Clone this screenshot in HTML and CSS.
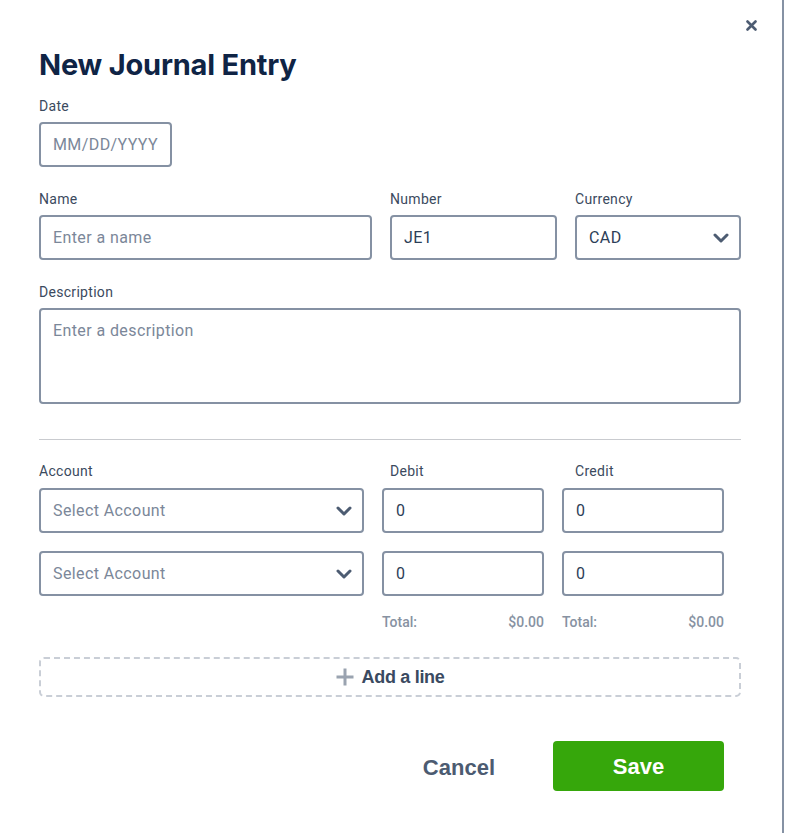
FILE: index.html
```html
<!DOCTYPE html>
<html lang="en">
<head>
  <meta charset="UTF-8">
  <title>New Journal Entry</title>
  <meta name="viewport" content="width=device-width, initial-scale=1.0">
  <link rel="stylesheet" href="styles.css">
</head>
<body>
  <div class="modal">
    <button class="close" type="button" aria-label="Close">
      <svg width="11" height="11" viewBox="0 0 11 11">
        <path d="M1.5 1.5 L9.5 9.5 M9.5 1.5 L1.5 9.5" stroke="#4d5c72" stroke-width="2.6" stroke-linecap="round"/>
      </svg>
    </button>

    <h1 class="title">New Journal Entry</h1>

    <form class="entry-form" autocomplete="off">
      <div class="field field-date">
        <label for="date">Date</label>
        <input type="text" id="date" placeholder="MM/DD/YYYY">
      </div>

      <div class="row-top">
        <div class="field">
          <label for="name">Name</label>
          <input type="text" id="name" placeholder="Enter a name">
        </div>
        <div class="field">
          <label for="number">Number</label>
          <input type="text" id="number" value="JE1">
        </div>
        <div class="field">
          <label for="currency">Currency</label>
          <div class="select-wrap">
            <select id="currency">
              <option>CAD</option>
              <option>USD</option>
            </select>
            <svg class="chevron" width="16" height="10" viewBox="0 0 16 10">
              <path d="M2 2 L8 8 L14 2" fill="none" stroke="#4d5c72" stroke-width="3" stroke-linecap="round" stroke-linejoin="round"/>
            </svg>
          </div>
        </div>
      </div>

      <div class="field">
        <label for="description">Description</label>
        <textarea id="description" placeholder="Enter a description"></textarea>
      </div>

      <hr class="divider">

      <div class="lines-head">
        <span>Account</span>
        <span>Debit</span>
        <span>Credit</span>
      </div>

      <div class="line">
        <div class="select-wrap">
          <select class="placeholder">
            <option>Select Account</option>
          </select>
          <svg class="chevron" width="16" height="10" viewBox="0 0 16 10">
            <path d="M2 2 L8 8 L14 2" fill="none" stroke="#4d5c72" stroke-width="3" stroke-linecap="round" stroke-linejoin="round"/>
          </svg>
        </div>
        <input type="text" value="0">
        <input type="text" value="0">
      </div>

      <div class="line">
        <div class="select-wrap">
          <select class="placeholder">
            <option>Select Account</option>
          </select>
          <svg class="chevron" width="16" height="10" viewBox="0 0 16 10">
            <path d="M2 2 L8 8 L14 2" fill="none" stroke="#4d5c72" stroke-width="3" stroke-linecap="round" stroke-linejoin="round"/>
          </svg>
        </div>
        <input type="text" value="0">
        <input type="text" value="0">
      </div>

      <div class="totals">
        <div></div>
        <div class="total"><span>Total:</span><span>$0.00</span></div>
        <div class="total"><span>Total:</span><span>$0.00</span></div>
      </div>

      <button class="add-line" type="button">
        <svg width="20" height="20" viewBox="0 0 20 20">
          <path d="M10 1.5 V18.5 M1.5 10 H18.5" stroke="#9aa3b0" stroke-width="3"/>
        </svg>
        <span>Add a line</span>
      </button>

      <div class="actions">
        <button class="cancel" type="button">Cancel</button>
        <button class="save" type="submit">Save</button>
      </div>
    </form>
  </div>
</body>
</html>
```

FILE: styles.css
```css
*,
*::before,
*::after {
  box-sizing: border-box;
}
body {
  margin: 0;
  background: #fff;
  font-family: Roboto, 'Noto Sans', sans-serif;
  color: #2c3e57;
}
.modal {
  position: relative;
  width: 784px;
  min-height: 833px;
  padding: 48px 0 0 39px;
  border-right: 2px solid #8692a4;
  background: #fff;
}
.close {
  position: absolute;
  top: 18px;
  right: 24px;
  width: 14px;
  height: 14px;
  padding: 0;
  border: none;
  background: none;
  display: flex;
  align-items: center;
  justify-content: center;
  cursor: pointer;
}
.title {
  margin: 0 0 15px;
  font-family: Inter, sans-serif;
  font-weight: 700;
  font-size: 29px;
  line-height: 34px;
  letter-spacing: -0.2px;
  color: #0f2445;
}
.entry-form {
  width: 702px;
}
.field {
  display: flex;
  flex-direction: column;
  margin-bottom: 23px;
}
.field label,
.lines-head span {
  font-size: 14px;
  line-height: 18px;
  letter-spacing: 0.3px;
  color: #3b4a5e;
  margin-bottom: 7px;
}
.field-date input {
  width: 133px;
}
input,
select,
textarea {
  height: 45px;
  padding: 0 12px;
  border: 2px solid #8591a3;
  border-radius: 4px;
  font-family: Roboto, 'Noto Sans', sans-serif;
  font-size: 16px;
  letter-spacing: 0.4px;
  color: #2c3e57;
  background: #fff;
  outline: none;
}
input::placeholder,
textarea::placeholder {
  color: #7b8799;
}
textarea {
  height: 96px;
  padding: 11px 12px;
  resize: none;
  line-height: 20px;
}
.row-top {
  display: grid;
  grid-template-columns: 333px 167px 166px;
  gap: 18px;
}
.select-wrap {
  position: relative;
  display: flex;
}
.select-wrap select {
  width: 100%;
  appearance: none;
  -webkit-appearance: none;
  cursor: pointer;
}
.select-wrap select.placeholder {
  color: #7b8799;
}
.chevron {
  position: absolute;
  right: 12px;
  top: 50%;
  margin-top: -5px;
  pointer-events: none;
}
.divider {
  height: 1px;
  margin: 35px 0 22px;
  border: none;
  background: #c9cbcf;
}
.lines-head {
  display: grid;
  grid-template-columns: 333px 167px 166px;
  gap: 18px;
  margin-bottom: 8px;
}
.lines-head span {
  display: block;
  margin-bottom: 0;
}
.line {
  display: grid;
  grid-template-columns: 325px 162px 162px;
  gap: 18px;
  margin-bottom: 18px;
}
.line input {
  width: 100%;
}
.totals {
  display: grid;
  grid-template-columns: 325px 162px 162px;
  gap: 18px;
  margin-top: -1px;
}
.total {
  display: flex;
  justify-content: space-between;
  font-size: 14px;
  font-weight: 500;
  line-height: 18px;
  color: #8792a2;
}
.add-line {
  display: flex;
  align-items: center;
  justify-content: center;
  gap: 6px;
  width: 100%;
  height: 40px;
  margin-top: 26px;
  border: 2px dashed #c9ced6;
  border-radius: 5px;
  background: #fff;
  font-family: 'Liberation Sans', Arial, sans-serif;
  font-weight: 700;
  font-size: 18px;
  letter-spacing: -0.3px;
  color: #3a4a61;
  cursor: pointer;
}
.actions {
  display: flex;
  justify-content: flex-end;
  align-items: center;
  gap: 58px;
  margin-top: 44px;
  padding-right: 17px;
}
.actions button {
  padding-top: 3px;
  font-family: 'Liberation Sans', Arial, sans-serif;
  font-weight: 700;
  font-size: 22px;
  cursor: pointer;
  border: none;
}
.cancel {
  padding: 3px 0 0;
  background: none;
  color: #4c5b71;
}
.save {
  width: 171px;
  height: 50px;
  border-radius: 4px;
  background: #36a70b;
  color: #fff;
}
```
